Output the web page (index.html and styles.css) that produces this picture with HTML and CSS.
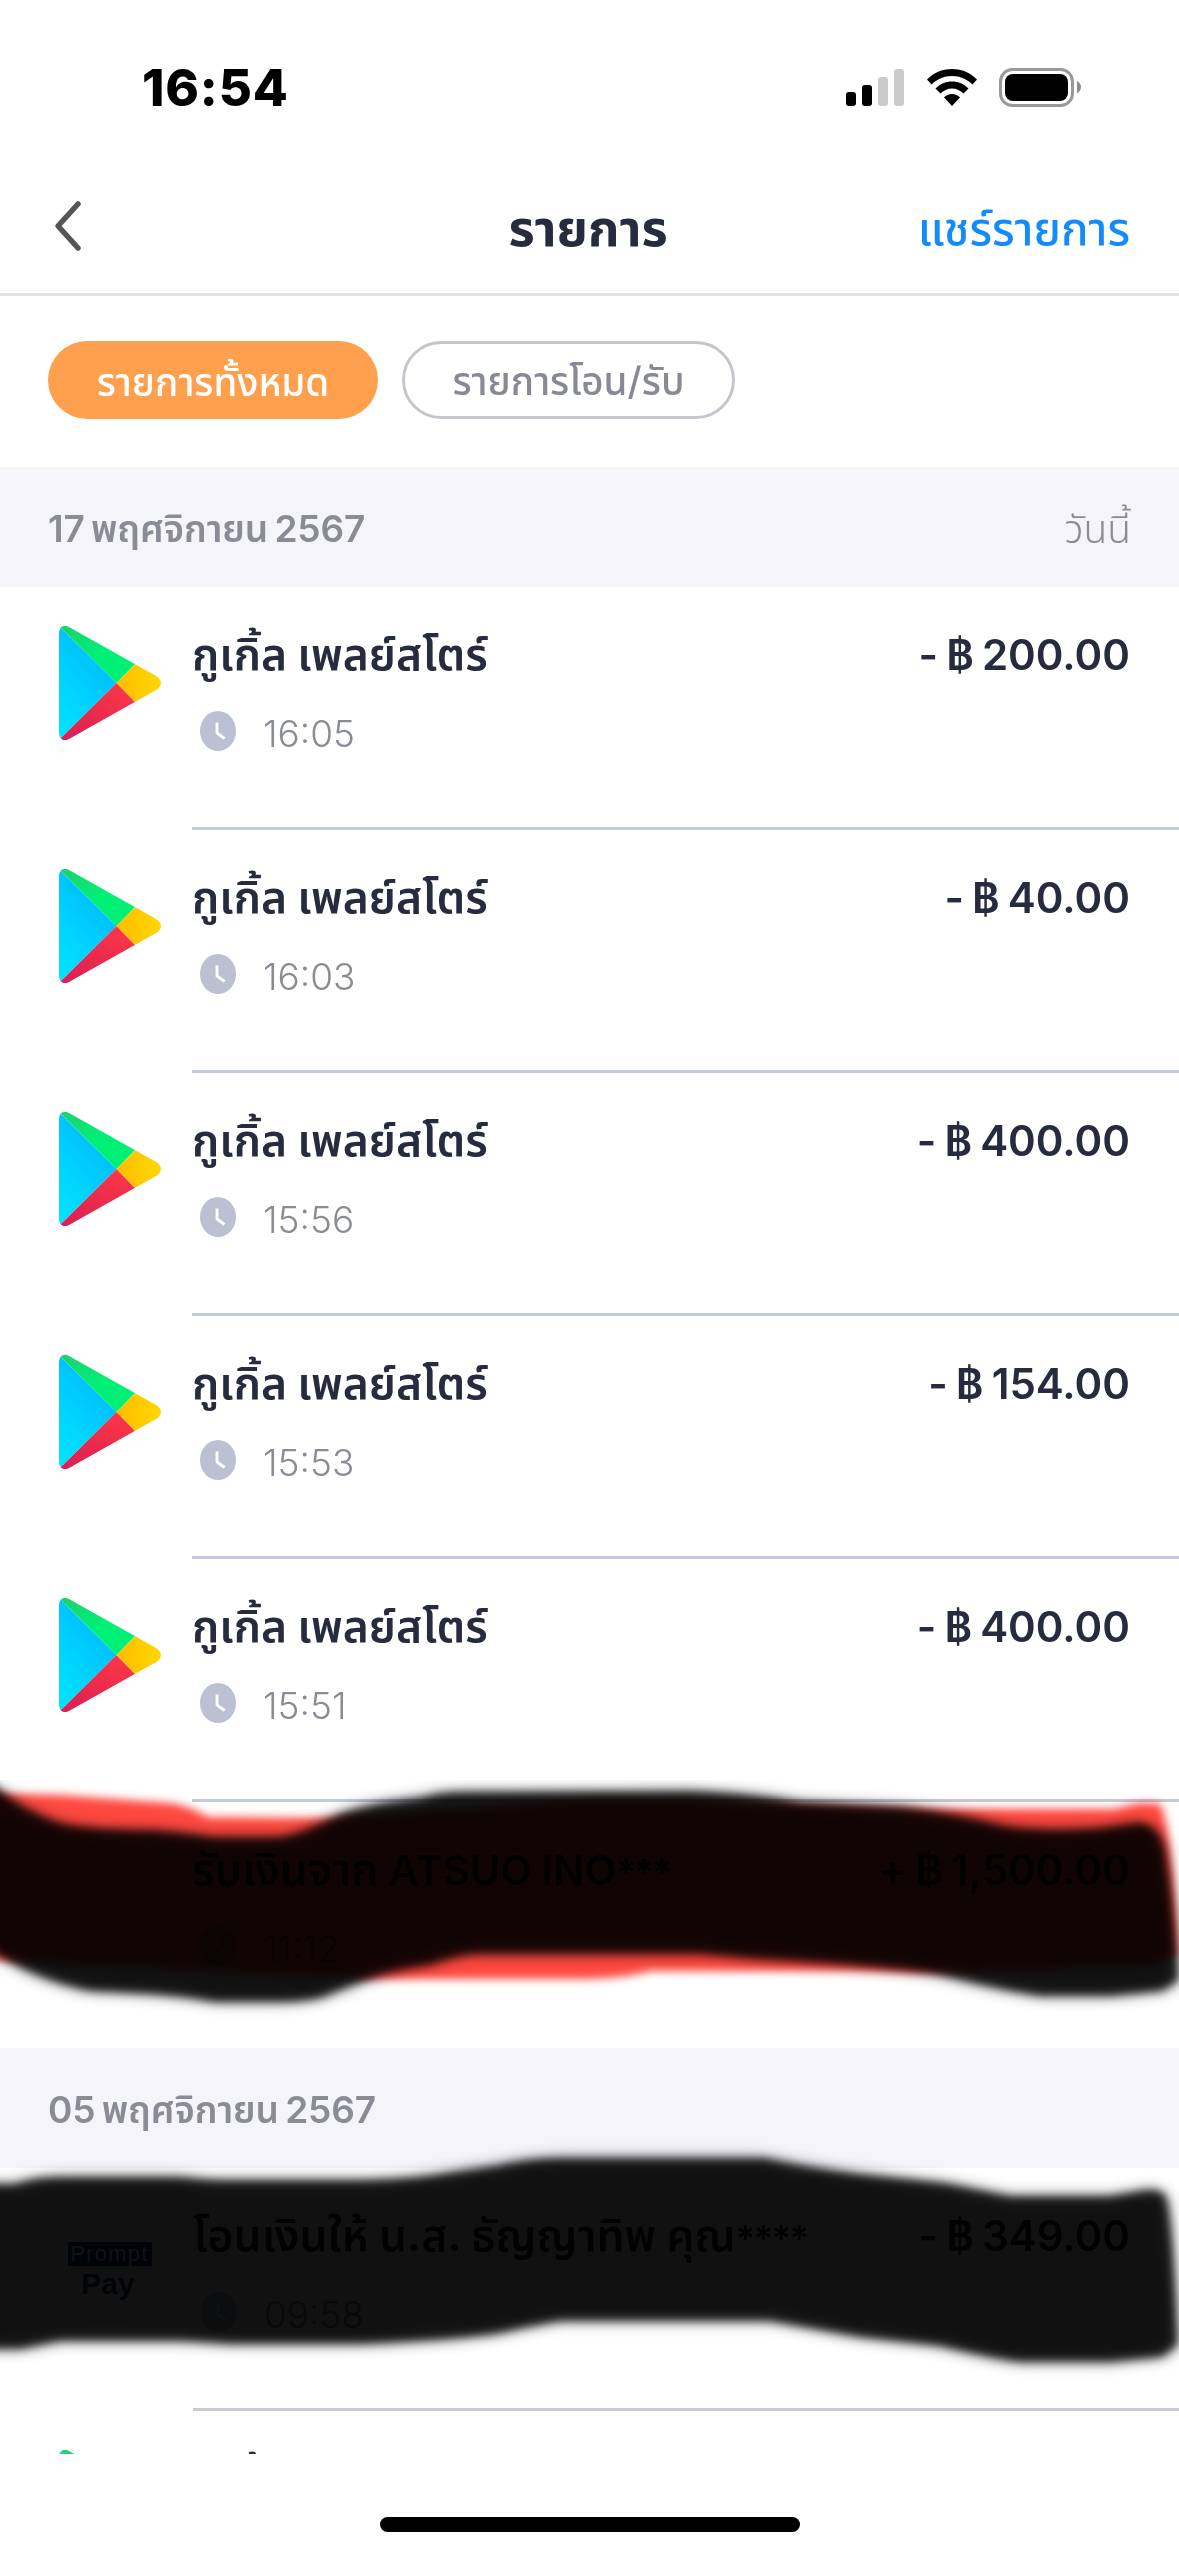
FILE: index.html
```html
<!DOCTYPE html>
<html lang="th">
<head>
<meta charset="utf-8">
<title>รายการ</title>
<link rel="stylesheet" href="styles.css">
</head>
<body>
<svg class="defs" width="0" height="0" aria-hidden="true">
  <defs>
    <linearGradient id="play-blue" x1="0.8" y1="0" x2="0.2" y2="1"><stop offset="0" stop-color="#00b4ff"/><stop offset="1" stop-color="#00e3ff"/></linearGradient>
    <linearGradient id="play-green" x1="0" y1="0" x2="0.5" y2="0.5"><stop offset="0" stop-color="#1fcf70"/><stop offset="1" stop-color="#00f076"/></linearGradient>
    <linearGradient id="play-red" x1="1" y1="0" x2="0" y2="1"><stop offset="0" stop-color="#ff3a44"/><stop offset="1" stop-color="#d81e56"/></linearGradient>
    <linearGradient id="play-yellow" x1="0" y1="0" x2="1" y2="0"><stop offset="0" stop-color="#ffbc00"/><stop offset="1" stop-color="#ffdc00"/></linearGradient>
    <clipPath id="play-shape"><path d="M0 7C0 1 5 -2 10 1L98 50.500Q106 57 98 63.500L10 113C5 116 0 113 0 107Z"/></clipPath>
    <symbol id="play" viewBox="0 0 102 114">
      <g clip-path="url(#play-shape)">
        <path d="M0 0L57.500 57L0 114Z" fill="url(#play-blue)"/>
        <path d="M1 0H80V34L57.500 57L0 0Z" fill="url(#play-green)"/>
        <path d="M1 114H80V80L57.500 57L0 114Z" fill="url(#play-red)"/>
        <path d="M57.500 57L80 34.500H110V79.500H80Z" fill="url(#play-yellow)"/>
      </g>
    </symbol>
    <symbol id="clock" viewBox="0 0 36 40">
      <ellipse cx="18" cy="20" rx="18" ry="20" fill="#bbc1d2"/>
      <path d="M17 11.500V22L24.500 27.500" fill="none" stroke="#fff" stroke-width="2.800"/>
    </symbol>
    <filter id="soft" x="-5%" y="-20%" width="110%" height="140%"><feGaussianBlur stdDeviation="4"/></filter>
    <filter id="softer" x="-5%" y="-20%" width="110%" height="140%"><feGaussianBlur stdDeviation="8"/></filter>
    <path id="marker-a" d="M-20 1775L0 1792Q25 1812 60 1824Q90 1831 150 1831Q180 1833 215 1838H280Q305 1834 340 1815Q370 1804 420 1799Q440 1793 460 1793L690 1792Q750 1794 800 1803L900 1808Q960 1815 1000 1826Q1040 1833 1100 1829L1135 1824Q1155 1822 1163 1845Q1172 1890 1178 1980L1162 1990L1110 1995H1040Q1000 1989 940 1974Q900 1966 760 1958L700 1953H475Q450 1956 430 1964Q400 1968 380 1974Q350 1985 320 1997Q300 2001 280 2001H215Q190 1996 150 1993L90 1990Q40 1980 0 1955L-20 1940Z"/>
    <path id="marker-b" d="M-20 2185L15 2185Q35 2178 60 2178H180Q205 2181 220 2181H360Q410 2180 440 2175L500 2166Q530 2159 560 2159H765Q800 2167 860 2175L945 2184Q980 2191 1010 2197H1110L1140 2192Q1158 2188 1165 2196Q1172 2220 1177 2345L1162 2356L1110 2361H1020Q990 2357 940 2345L860 2336L770 2320H560Q530 2325 500 2332Q460 2339 360 2343H230Q200 2341 180 2340H60Q40 2344 20 2348H-20Z"/>
  </defs>
</svg>

<div class="screen">
  <header class="status">
    <span class="status-time">16:54</span>
    <div class="status-icons">
      <svg width="58" height="38" viewBox="0 0 58 38"><rect y="23" width="10" height="14" rx="3"/><rect x="16" y="16" width="10" height="21" rx="3"/><g fill="#cbcbcb"><rect x="32" y="8" width="10" height="29" rx="3"/><rect x="48" width="10" height="37" rx="3"/></g></svg>
      <svg class="wifi" width="50" height="38" viewBox="0 0 50 38"><path d="M25 0C35 0 43.500 4 50 10.500L45.500 15.500C40 10.200 33 7 25 7S10 10.200 4.500 15.500L0 10.500C6.500 4 15 0 25 0Z"/><path d="M25 12.500C31.500 12.500 37 15 41.500 19.500L36.500 24.500C33.500 21.500 29.500 19.500 25 19.500S16.500 21.500 13.500 24.500L8.500 19.500C13 15 18.500 12.500 25 12.500Z"/><path d="M25 25C28.200 25 31 26.200 33 28.500L25 37L17 28.500C19 26.200 21.800 25 25 25Z"/></svg>
      <svg width="82" height="39" viewBox="0 0 82 39"><rect x="1.500" y="1.500" width="72" height="36" rx="12" fill="none" stroke="#999" stroke-width="3"/><rect x="6" y="6" width="63" height="27" rx="8"/><path d="M78 13Q82 15.500 82 19T78 25.500Z" fill="#8c8c8c"/></svg>
    </div>
  </header>

  <nav class="nav">
    <svg class="back" width="30" height="52" viewBox="0 0 30 52"><path d="M25 4L5 26L25 48" fill="none" stroke="#555" stroke-width="5.500" stroke-linecap="round" stroke-linejoin="round"/></svg>
    <h1 class="nav-title">รายการ</h1>
    <a class="nav-share">แชร์รายการ</a>
  </nav>

  <div class="filters">
    <button class="pill pill-active">รายการทั้งหมด</button>
    <button class="pill pill-outline">รายการโอน/รับ</button>
  </div>

  <main class="list">
    <div class="day"><span class="day-date">17 พฤศจิกายน 2567</span><span class="day-note">วันนี้</span></div>

    <div class="row">
      <svg class="logo"><use href="#play"/></svg>
      <div class="body">
        <div class="line"><span class="name">กูเกิ้ล เพลย์สโตร์</span><span class="amount">- ฿ 200.00</span></div>
        <div class="meta"><svg class="clock"><use href="#clock"/></svg><span>16:05</span></div>
      </div>
    </div>
    <div class="row">
      <svg class="logo"><use href="#play"/></svg>
      <div class="body">
        <div class="line"><span class="name">กูเกิ้ล เพลย์สโตร์</span><span class="amount">- ฿ 40.00</span></div>
        <div class="meta"><svg class="clock"><use href="#clock"/></svg><span>16:03</span></div>
      </div>
    </div>
    <div class="row">
      <svg class="logo"><use href="#play"/></svg>
      <div class="body">
        <div class="line"><span class="name">กูเกิ้ล เพลย์สโตร์</span><span class="amount">- ฿ 400.00</span></div>
        <div class="meta"><svg class="clock"><use href="#clock"/></svg><span>15:56</span></div>
      </div>
    </div>
    <div class="row">
      <svg class="logo"><use href="#play"/></svg>
      <div class="body">
        <div class="line"><span class="name">กูเกิ้ล เพลย์สโตร์</span><span class="amount">- ฿ 154.00</span></div>
        <div class="meta"><svg class="clock"><use href="#clock"/></svg><span>15:53</span></div>
      </div>
    </div>
    <div class="row">
      <svg class="logo"><use href="#play"/></svg>
      <div class="body">
        <div class="line"><span class="name">กูเกิ้ล เพลย์สโตร์</span><span class="amount">- ฿ 400.00</span></div>
        <div class="meta"><svg class="clock"><use href="#clock"/></svg><span>15:51</span></div>
      </div>
    </div>
    <div class="row row-last">
      <div class="logo"></div>
      <div class="body">
        <div class="line"><span class="name">รับเงินจาก <span class="latin">ATSUO INO</span><span class="stars">***</span></span><span class="amount">+ ฿ 1,500.00</span></div>
        <div class="meta"><svg class="clock"><use href="#clock"/></svg><span>11:12</span></div>
      </div>
      <svg class="scribble scribble-red" width="1179" height="240" viewBox="0 1780 1179 240">
        <path filter="url(#soft)" fill="#ff4a40" d="M-20 1793L60 1795L170 1803Q190 1806 208 1817L330 1818L600 1800L931 1809H1115Q1135 1803 1145 1803L1160 1804Q1172 1825 1178 1955L1150 1965L920 1973L850 1971H650Q620 1980 560 1979H380L0 1960H-20Z"/>
      </svg>
      <svg class="scribble" width="1179" height="240" viewBox="0 1780 1179 240">
        <use href="#marker-a" filter="url(#soft)" opacity="0.8"/>
        <use href="#marker-a" filter="url(#softer)" opacity="0.65"/>
      </svg>
    </div>

    <div class="day"><span class="day-date">05 พฤศจิกายน 2567</span></div>

    <div class="row">
      <div class="logo promptpay"><span class="pp-top">Prompt</span><span class="pp-bottom">Pay</span></div>
      <div class="body">
        <div class="line"><span class="name">โอนเงินให้ น.ส. ธัญญาทิพ คุณ<span class="stars">****</span></span><span class="amount">- ฿ 349.00</span></div>
        <div class="meta"><svg class="clock"><use href="#clock"/></svg><span>09:58</span></div>
      </div>
      <svg class="scribble scribble-black" width="1179" height="240" viewBox="0 2140 1179 240">
        <use href="#marker-b" filter="url(#soft)" opacity="0.8"/>
        <use href="#marker-b" filter="url(#softer)" opacity="0.65"/>
      </svg>
    </div>

    <div class="row">
      <svg class="logo"><use href="#play"/></svg>
      <div class="body">
        <div class="line"><span class="name">กูเกิ้ล</span></div>
      </div>
    </div>
  </main>

  <footer class="home"><div class="home-bar"></div></footer>
</div>
</body>
</html>
```
FILE: styles.css
```css
* { box-sizing: border-box; }
body {
  margin: 0;
  background: #fff;
  color: #262b3d;
  font-family: Inter, "Noto Sans Thai", "Noto Sans", sans-serif;
}
.defs { position: absolute; }
.screen {
  width: 1179px;
  height: 2556px;
  display: flex;
  flex-direction: column;
  overflow: hidden;
}

.status {
  height: 167px;
  padding: 0 98px 0 142px;
  display: flex;
  justify-content: space-between;
  align-items: flex-start;
  color: #000;
}
.status-time {
  margin-top: 58px;
  font-size: 51px;
  font-weight: 800;
  line-height: 60px;
  letter-spacing: 0.800px;
}
.status-icons { display: flex; margin-top: 69px; }
.status-icons svg:last-child { margin: -1px 0 0 22px; }
.wifi { margin-left: 23px; }

.nav {
  height: 129px;
  padding: 0 49px 0 53px;
  display: grid;
  grid-template-columns: 1fr auto 1fr;
  align-items: center;
  border-bottom: 3px solid #e1e1e1;
}
.back { margin-top: -8px; }
.nav-title { margin: -5px 7px 0 0; font-size: 50.500px; font-weight: 700; line-height: 70px; }
.nav-share { justify-self: end; margin-top: -3px; font-size: 45.500px; font-weight: 500; line-height: 60px; color: #148bfb; }

.filters { display: flex; gap: 24px; padding: 45px 48px 48px; }
.pill {
  height: 78px;
  margin: 0;
  padding: 3px 0 0;
  border: 0;
  border-radius: 39px;
  font: 500 38.500px/74px Inter, "Noto Sans Thai", sans-serif;
  text-align: center;
  white-space: nowrap;
}
.pill-active { width: 330px; background: #ffa04f; color: #fff; }
.pill-outline { width: 333px; border: 3px solid #c6c5cd; background: #fff; color: #878995; padding: 0; line-height: 74px; }

.list { height: 1987px; overflow: hidden; }
.day {
  height: 120px;
  padding: 3px 48px 0 48px;
  display: flex;
  justify-content: space-between;
  align-items: center;
  background: #f5f4fa;
  color: #898b96;
  font-size: 37px;
  line-height: 60px;
}
.day-date { font-weight: 600; word-spacing: -3px; letter-spacing: -0.100px; }
.day-note { font-size: 39px; font-weight: 300; }

.row { position: relative; display: flex; height: 243px; padding-left: 59px; }
.row-last { height: 246px; }
.logo { flex: none; width: 102px; height: 114px; margin: 39px 31px 0 0; }
.body { flex: 1; padding: 37px 49px 0 0; border-bottom: 3px solid #c6cbda; }
.row-last .body { border-bottom: 0; }
.line { display: flex; justify-content: space-between; align-items: baseline; height: 60px; line-height: 60px; white-space: nowrap; }
.name { font-size: 44.400px; font-weight: 600; word-spacing: -1px; }
.latin { font-size: 41.500px; }
.stars { font-size: 36px; letter-spacing: -1.500px; }
.amount { font-size: 42px; font-weight: 600; word-spacing: -2.500px; }
.meta { display: flex; align-items: center; gap: 27px; height: 50px; margin-top: 25px; padding-left: 8px; color: #898b96; font-size: 37px; font-weight: 300; line-height: 50px; }
.clock { width: 36px; height: 40px; margin-top: -6px; }

.promptpay {
  width: 122px;
  height: 122px;
  margin: 34px 24px 0 -12px;
  display: flex;
  flex-direction: column;
  align-items: center;
  border: 1px solid #d9dce6;
  border-radius: 50%;
  color: #0a3a6b;
  font-family: "Liberation Sans", sans-serif;
}
.pp-top { width: 84px; height: 24px; margin: 39px 0 0 3px; background: #0a3a6b; color: #fff; font-size: 22px; line-height: 24px; letter-spacing: 1.200px; text-align: center; }
.pp-bottom { margin-top: 2px; font-size: 30px; font-weight: 700; line-height: 32px; }

.scribble { position: absolute; left: 0; top: -22px; }
.scribble-red { mix-blend-mode: multiply; }
.scribble-black { top: -28px; }

.home { flex: 1; display: flex; justify-content: center; padding-top: 63px; }
.home-bar { width: 420px; height: 15px; border-radius: 8px; background: #000; }
```
